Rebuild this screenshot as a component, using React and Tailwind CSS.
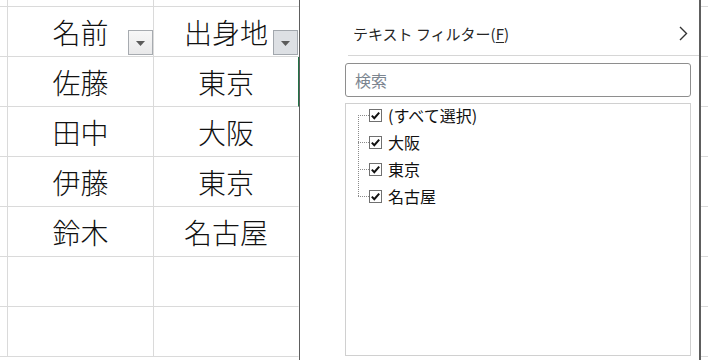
import { Fragment } from "react"

const rows = [
  ["名前", "出身地"],
  ["佐藤", "東京"],
  ["田中", "大阪"],
  ["伊藤", "東京"],
  ["鈴木", "名古屋"],
  ["", ""],
  ["", ""],
]

const items = ["(すべて選択)", "大阪", "東京", "名古屋"]

const jp = "font-['Noto_Sans_CJK_JP','Noto_Sans',sans-serif]"

function FilterButton({ active }) {
  return (
    <div
      className={
        "absolute right-0 bottom-[1px] w-[25px] h-[25px] border flex items-center justify-center " +
        (active
          ? "bg-[#dde0e4] border-[#a2a7ad]"
          : "bg-gradient-to-b from-[#f7f7f7] to-[#e9e9ea] border-[#a7abb0]")
      }
    >
      <svg width="9" height="5" viewBox="0 0 9 5" className="mt-[2px]">
        <polygon points="0,0 9,0 4.5,5" fill="#5b5b5b" />
      </svg>
    </div>
  )
}

function CheckBox() {
  return (
    <div className="w-[13px] h-[13px] border border-[#707070] bg-white flex items-center justify-center">
      <svg width="11" height="11" viewBox="0 0 11 11">
        <path d="M1.8 5.6 L4.3 8.2 L9.2 2.6" fill="none" stroke="#111" strokeWidth="2" />
      </svg>
    </div>
  )
}

function Sheet() {
  return (
    <div className={"w-[299px] h-full grid grid-cols-[8px_146px_145px] content-start font-light " + jp}>
      <div className="h-[7px] border-r border-b border-[#dadada]" />
      <div className="h-[7px] border-r border-b border-[#dadada]" />
      <div className="h-[7px] border-b border-[#dadada]" />
      {rows.map((r, i) => (
        <Fragment key={i}>
          <div className="h-[50px] border-r border-b border-[#dadada]" />
          <div className="relative h-[50px] border-r border-b border-[#dadada] flex items-center justify-center text-[28px] leading-none text-[#111]">
            {r[0]}
            {i === 0 && <FilterButton />}
          </div>
          <div
            className={
              "relative h-[50px] border-b border-r border-b-[#dadada] flex items-center justify-center text-[28px] leading-none text-[#111] " +
              (i === 1 ? "border-r-[#217346]" : "border-r-transparent")
            }
          >
            {r[1]}
            {i === 0 && <FilterButton active />}
          </div>
        </Fragment>
      ))}
    </div>
  )
}

function Strip() {
  return (
    <div className="w-[7px] h-full flex flex-col">
      <div className="h-[7px] border-b border-[#dadada]" />
      {rows.map((_, i) => (
        <div key={i} className="h-[50px] border-b border-[#dadada]" />
      ))}
    </div>
  )
}

function FilterMenu() {
  return (
    <div className={"w-[402px] h-full bg-white border-l border-r-2 border-[#5e5e5e] flex flex-col " + jp}>
      <div className="h-[55px] pt-[11px] pl-[53px] pr-[11px] flex items-center justify-between">
        <span className="text-[15px] text-[#262626] leading-none">
          テキスト フィルター(<span className="underline underline-offset-2">F</span>)
        </span>
        <svg width="9" height="15" viewBox="0 0 9 15">
          <path d="M1 1 L7.5 7.5 L1 14" fill="none" stroke="#333" strokeWidth="1.4" />
        </svg>
      </div>
      <div className="ml-[48px] h-px bg-[#d6d6d6]" />
      <div className="mt-[7px] ml-[45px] mr-[8px] h-[34px] border border-[#8e8e8e] rounded-[3px] flex items-center px-[9px]">
        <span className="text-[16px] leading-none text-[#7c8590]">検索</span>
      </div>
      <div className="relative mt-[6px] ml-[45px] mr-[8px] h-[253px] border border-[#d0d0d0] pt-px flex flex-col gap-[7px]">
        <div className="absolute left-[12px] top-[11px] h-[81px] border-l border-dotted border-[#8a8a8a]" />
        {items.map((t) => (
          <div key={t} className="h-[20px] flex items-center">
            <div className="ml-[12px] w-[11px] border-t border-dotted border-[#8a8a8a]" />
            <CheckBox />
            <span className="ml-[6px] text-[16px] leading-none text-[#111]">{t}</span>
          </div>
        ))}
      </div>
    </div>
  )
}

export default function App() {
  return (
    <div className="w-[708px] h-[360px] overflow-hidden bg-white flex">
      <Sheet />
      <FilterMenu />
      <Strip />
    </div>
  )
}
